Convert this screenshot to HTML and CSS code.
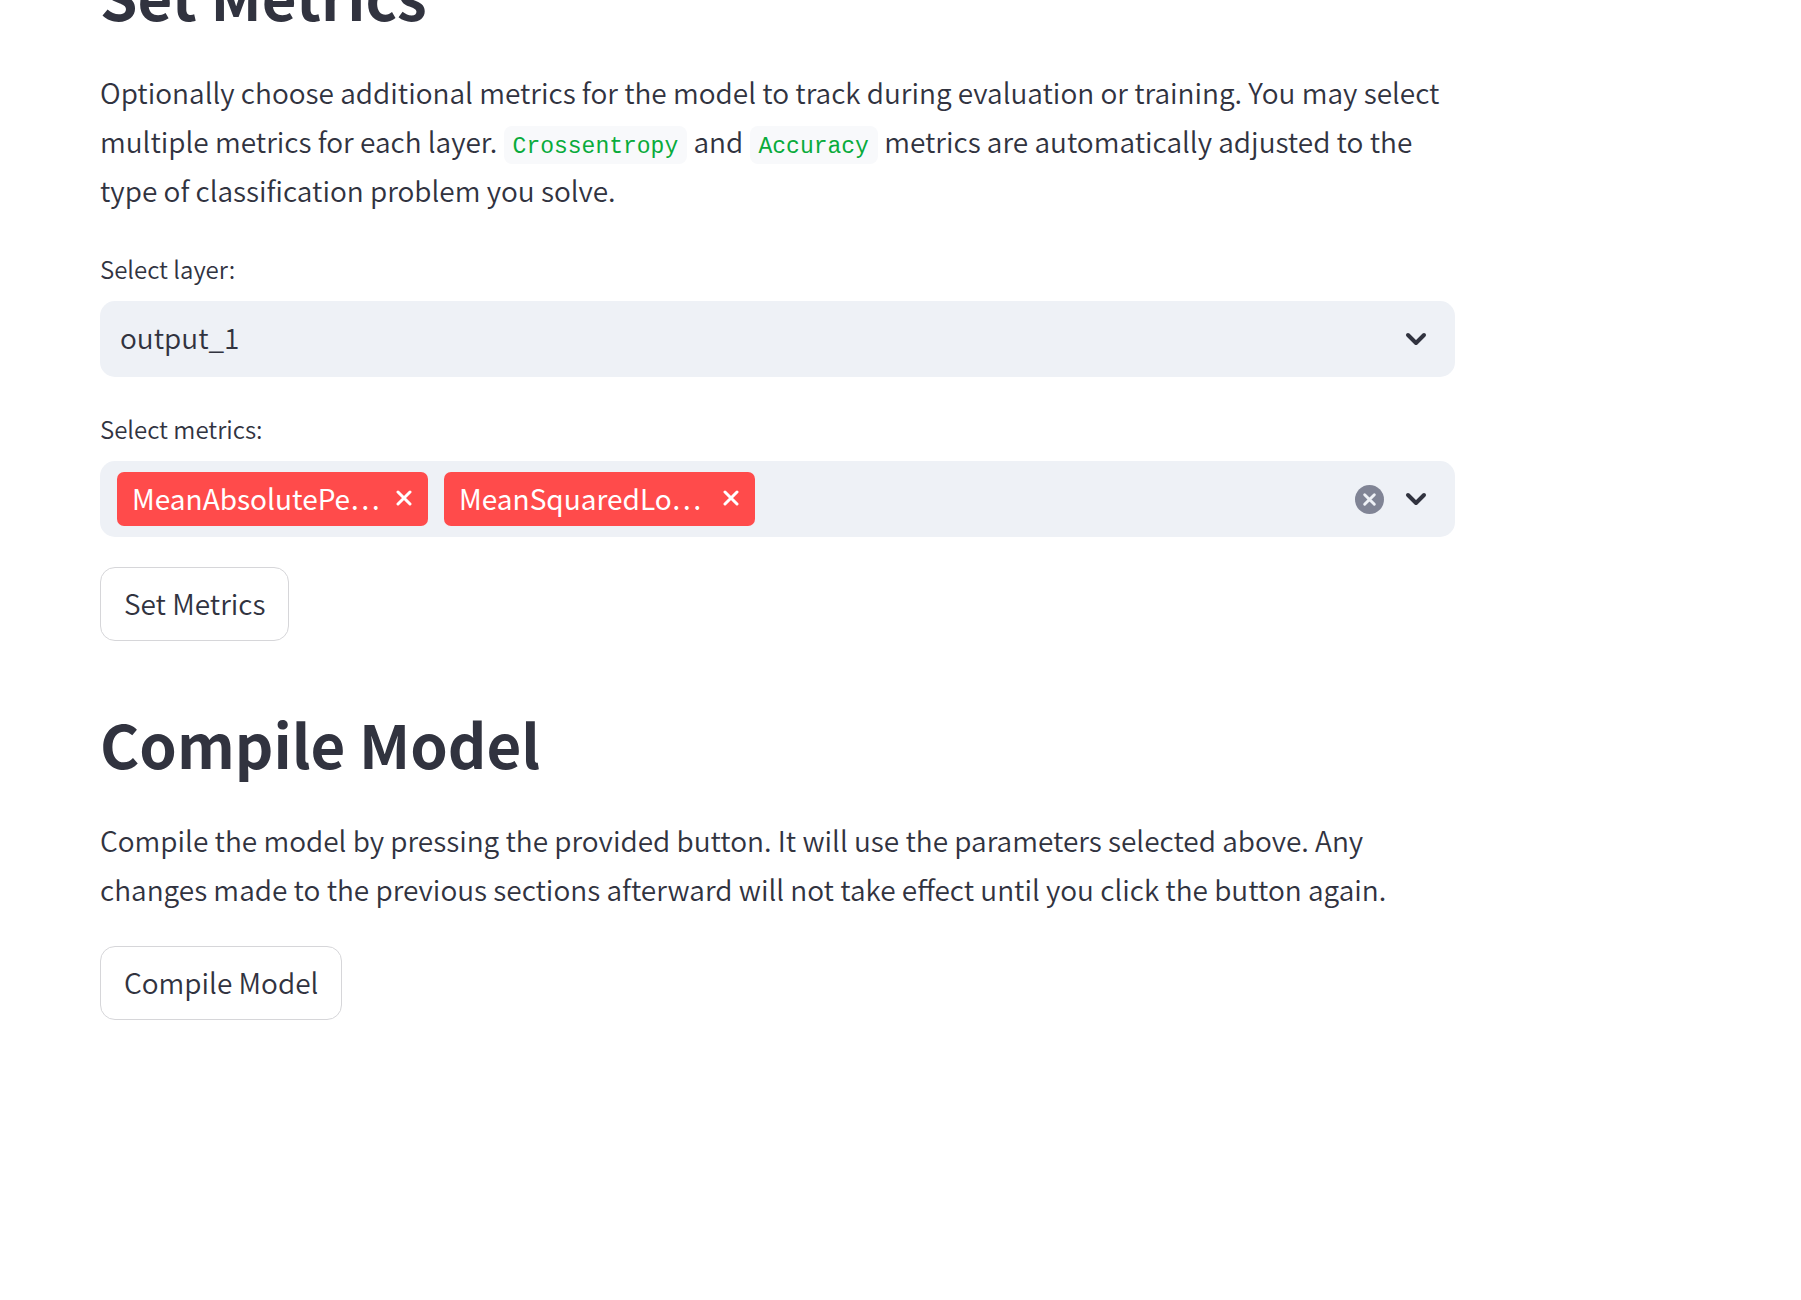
FILE: index.html
```html
<!DOCTYPE html>
<html lang="en">
<head>
<meta charset="utf-8">
<meta name="viewport" content="width=device-width, initial-scale=1">
<title>Compile Model</title>
<link rel="stylesheet" href="styles.css">
</head>
<body>
<main class="page">
  <section class="section">
    <h1 class="heading">Set Metrics</h1>
    <p class="text">Optionally choose additional metrics for the model to track during evaluation or training. You may select multiple metrics for each layer. <code class="code">Crossentropy</code> and <code class="code">Accuracy</code> metrics are automatically adjusted to the type of classification problem you solve.</p>
    <form class="form">
      <div class="field">
        <label class="label" for="layer">Select layer:</label>
        <div class="control">
          <select class="select" id="layer"><option>output_1</option></select>
          <svg class="chevron" viewBox="0 0 32 32" aria-hidden="true"><path d="M8 12l8 8 8-8"/></svg>
        </div>
      </div>
      <div class="field">
        <label class="label" for="metrics">Select metrics:</label>
        <div class="control control-multi">
          <span class="tag"><span class="tag-text">MeanAbsolutePe…</span><button class="tag-remove" type="button" aria-label="Remove"><svg viewBox="0 0 16 16"><path d="M2 2l12 12M14 2L2 14"/></svg></button></span>
          <span class="tag"><span class="tag-text">MeanSquaredLo…</span><button class="tag-remove" type="button" aria-label="Remove"><svg viewBox="0 0 16 16"><path d="M2 2l12 12M14 2L2 14"/></svg></button></span>
          <input class="search" id="metrics" type="text" autocomplete="off">
          <button class="clear" type="button" aria-label="Clear all"><svg viewBox="0 0 30 30"><circle cx="15" cy="15" r="15"/><path d="M10 10l10 10M20 10L10 20"/></svg></button>
          <svg class="chevron" viewBox="0 0 32 32" aria-hidden="true"><path d="M8 12l8 8 8-8"/></svg>
        </div>
      </div>
      <button class="button" type="button">Set Metrics</button>
    </form>
  </section>
  <section class="section">
    <h1 class="heading">Compile Model</h1>
    <p class="text">Compile the model by pressing the provided button. It will use the parameters selected above. Any changes made to the previous sections afterward will not take effect until you click the button again.</p>
    <button class="button" type="button">Compile Model</button>
  </section>
</main>
</body>
</html>
```
FILE: styles.css
```css
* {
  box-sizing: border-box;
}

body {
  margin: 0;
  background: #fff;
  color: #31333f;
  font-family: "Noto Sans CJK KR", "Noto Sans", sans-serif;
  font-size: 28px;
  font-weight: 350;
  line-height: 49px;
}

button,
input,
select {
  font: inherit;
  color: inherit;
}

/* The view starts part-way down the first heading */
.page {
  display: flex;
  flex-direction: column;
  gap: 61px;
  max-width: 1555px;
  margin-top: -46px;
  padding: 0 100px;
}

.section {
  display: flex;
  flex-direction: column;
  align-items: flex-start;
  gap: 32px;
}

.heading {
  margin: 0;
  font-size: 60px;
  font-weight: 600;
  line-height: 82px;
}

.text {
  margin: 0;
}

.code {
  padding: 8px 9px 4px;
  border-radius: 8px;
  background: #f8f9fb;
  color: #09ab3b;
  font-family: "Liberation Mono", monospace;
  font-size: 23px;
  line-height: 1;
}

.form {
  display: flex;
  flex-direction: column;
  align-items: flex-start;
  gap: 30px;
  width: 100%;
}

.field {
  display: flex;
  flex-direction: column;
  gap: 10px;
  width: 100%;
}

.label {
  font-size: 24px;
  line-height: 44px;
}

.control {
  display: grid;
  align-items: center;
  height: 76px;
  border-radius: 15px;
  background: #eef1f6;
}

.control > .select,
.control > .chevron {
  grid-area: 1 / 1;
}

.select {
  width: 100%;
  height: 76px;
  padding: 0 20px 4px;
  border: 0;
  background: none;
  appearance: none;
}

.chevron {
  justify-self: end;
  width: 32px;
  height: 32px;
  margin-right: 23px;
  fill: none;
  stroke: #31333f;
  stroke-width: 4;
  stroke-linecap: round;
  stroke-linejoin: round;
  pointer-events: none;
}

.control-multi {
  display: flex;
  gap: 16px;
  padding-left: 17px;
}

.tag {
  display: flex;
  align-items: center;
  justify-content: space-between;
  width: 311px;
  height: 54px;
  padding: 0 16px 2px 15px;
  border-radius: 7px;
  background: #ff4b4b;
  color: #fff;
  font-weight: 400;
}

.tag-text {
  white-space: nowrap;
}

.tag-remove,
.clear {
  display: flex;
  padding: 0;
  border: 0;
  background: none;
}

.tag-remove svg {
  width: 16px;
  height: 16px;
  stroke: #fff;
  stroke-width: 3;
  stroke-linecap: round;
}

.search {
  flex: 1;
  min-width: 0;
  border: 0;
  outline: 0;
  background: none;
}

.clear svg {
  width: 29px;
  height: 29px;
  fill: #808495;
  stroke-linecap: round;
}

.clear path {
  stroke: #eef1f6;
  stroke-width: 3;
}

.button {
  height: 74px;
  padding: 0 23px 2px;
  border: 1px solid #d6d6d9;
  border-radius: 15px;
  background: #fff;
}
```
